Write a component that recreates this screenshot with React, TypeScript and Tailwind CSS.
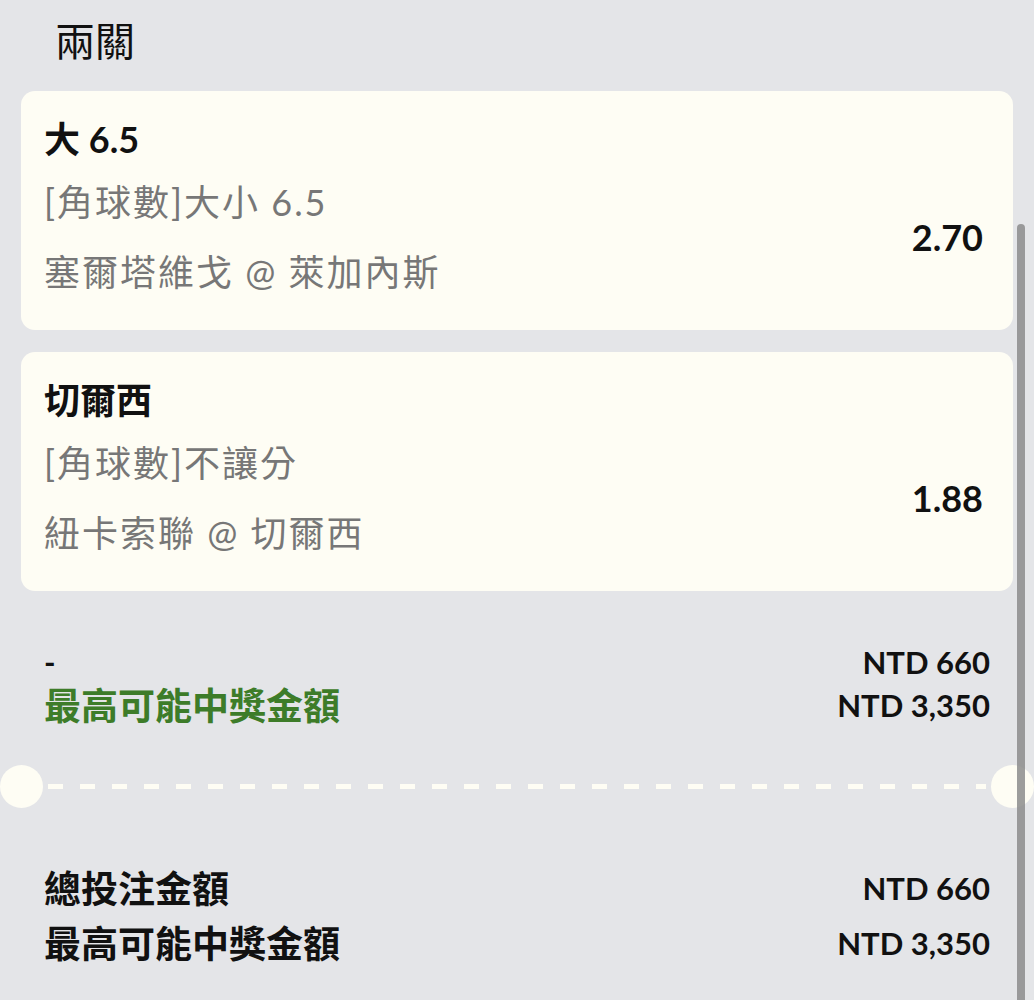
import React from 'react'

interface Leg {
  pick: string
  market: string
  match: string
  odds: string
}

const legs: Leg[] = [
  { pick: '大 6.5', market: '[角球數]大小 6.5', match: '塞爾塔維戈 @ 萊加內斯', odds: '2.70' },
  { pick: '切爾西', market: '[角球數]不讓分', match: '紐卡索聯 @ 切爾西', odds: '1.88' },
]

const font = { fontFamily: 'Lato, "Noto Sans CJK TC", sans-serif' }

function LegCard({ leg }: { leg: Leg }) {
  return (
    <div className="rounded-[14px] bg-[#fefdf4] pl-[23px] pr-[30px] pt-[24px] pb-[23px]">
      <div className="text-[36px] leading-[48px] font-bold text-[#111]">{leg.pick}</div>
      <div className="mt-[4px] flex items-center justify-between">
        <div className="text-[36px] tracking-[2px] text-[#777]">
          <div className="leading-[70px]">{leg.market}</div>
          <div className="leading-[70px]">{leg.match}</div>
        </div>
        <div className="text-[36px] font-bold text-[#111]">{leg.odds}</div>
      </div>
    </div>
  )
}

export default function App() {
  return (
    <div className="relative min-h-screen w-full overflow-hidden bg-[#e4e5e8]" style={font}>
      {/* Title */}
      <div className="pl-[55px] pt-[18px] text-[40px] leading-[46px] text-[#111]">兩關</div>

      {/* Legs */}
      <div className="mx-[21px] mt-[27px] flex flex-col gap-[22px]">
        {legs.map((leg) => (
          <LegCard key={leg.pick} leg={leg} />
        ))}
      </div>

      {/* Stake row */}
      <div className="mt-[50px] px-[44px]">
        <div className="flex items-center justify-between leading-[43px]">
          <span className="text-[31px] font-bold text-[#111]">-</span>
          <span className="text-[31px] font-bold text-[#111]">NTD 660</span>
        </div>
        <div className="flex items-center justify-between leading-[43px]">
          <span className="text-[37px] font-bold text-[#3d7c29]">最高可能中獎金額</span>
          <span className="text-[31px] font-bold text-[#111]">NTD 3,350</span>
        </div>
      </div>

      {/* Ticket separator */}
      <div className="mt-[38px] flex items-center">
        <div className="h-[43px] w-[43px] shrink-0 rounded-full bg-[#fefdf4]" />
        <div className="mx-[5px] h-[5px] flex-1 bg-[repeating-linear-gradient(90deg,#fefdf4_0_15px,transparent_15px_32px)]" />
        <div className="h-[43px] w-[43px] shrink-0 rounded-full bg-[#fefdf4]" />
      </div>

      {/* Totals */}
      <div className="mt-[53px] px-[44px] pb-[30px]">
        <div className="flex items-center justify-between leading-[55px]">
          <span className="text-[37px] font-bold text-[#111]">總投注金額</span>
          <span className="text-[31px] font-bold text-[#111]">NTD 660</span>
        </div>
        <div className="flex items-center justify-between leading-[55px]">
          <span className="text-[37px] font-bold text-[#111]">最高可能中獎金額</span>
          <span className="text-[31px] font-bold text-[#111]">NTD 3,350</span>
        </div>
      </div>

      {/* Scroll indicator */}
      <div className="absolute right-[9px] top-[224px] h-[820px] w-[8px] rounded-t-full bg-[#8c8c8c]/85" />
    </div>
  )
}
